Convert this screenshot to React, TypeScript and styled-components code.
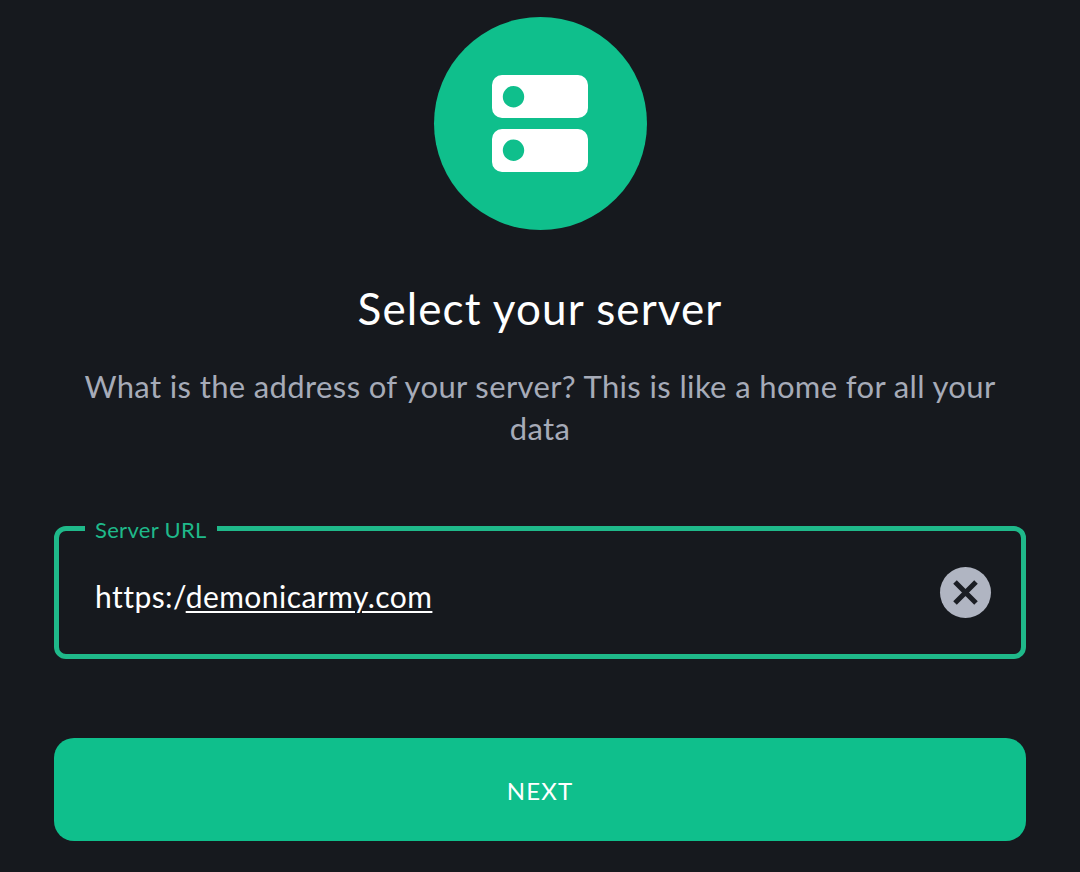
import React from "react";
import styled, { createGlobalStyle } from "styled-components";

const Global = createGlobalStyle`
  html, body { margin: 0; padding: 0; background: #16191e; }
  #root { width: 1080px; height: 872px; overflow: hidden; }
`;

const Page = styled.main`
  width: 1080px;
  height: 872px;
  box-sizing: border-box;
  padding: 17px 54px 0;
  background: #16191e;
  display: flex;
  flex-direction: column;
  align-items: center;
  font-family: Lato, "Liberation Sans", sans-serif;
`;

const Badge = styled.div`
  width: 213px;
  height: 213px;
  border-radius: 50%;
  background: #0fbf8c;
  display: flex;
  align-items: center;
  justify-content: center;
  flex: none;
`;

const Title = styled.h1`
  margin: 52px 0 0;
  font-size: 44px;
  line-height: 52px;
  font-weight: 400;
  letter-spacing: 1.1px;
  color: #ffffff;
  text-align: center;
`;

const Subtitle = styled.p`
  margin: 31px 0 0;
  width: 940px;
  font-size: 31px;
  line-height: 42px;
  font-weight: 400;
  letter-spacing: 0.37px;
  color: #a6abb8;
  text-align: center;
`;

const Field = styled.fieldset`
  margin: 0;
  margin-top: 77px;
  padding: 0;
  width: 100%;
  height: 133px;
  box-sizing: border-box;
  border: 5px solid #1fb98a;
  border-radius: 12px;
`;

const Legend = styled.legend`
  margin-left: 26px;
  padding: 0 10px;
  font-size: 22px;
  line-height: 8px;
  height: 5px;
  font-weight: 400;
  letter-spacing: 0.3px;
  color: #1fb98a;
`;

const FieldRow = styled.div`
  height: 123px;
  box-sizing: border-box;
  padding: 0 30px 0 36px;
  display: flex;
  align-items: center;
  justify-content: space-between;
`;

const Value = styled.div`
  font-size: 30px;
  font-weight: 400;
  letter-spacing: 0.45px;
  color: #ffffff;
  margin-top: 6px;
`;

const Link = styled.span`
  text-decoration: underline;
  text-decoration-thickness: 2px;
  text-underline-offset: 3px;
`;

const Clear = styled.button`
  width: 51px;
  height: 51px;
  padding: 0;
  border: 0;
  border-radius: 50%;
  background: #b0b5c2;
  display: flex;
  align-items: center;
  justify-content: center;
  flex: none;
`;

const NextButton = styled.button`
  margin-top: 79px;
  padding: 2px 0 0;
  width: 100%;
  height: 103px;
  border: 0;
  border-radius: 20px;
  background: #0fbf8c;
  color: #ffffff;
  font-family: inherit;
  font-size: 24px;
  font-weight: 400;
  letter-spacing: 1.2px;
  flex: none;
`;

export default function App() {
  return (
    <Page>
      <Global />
      <Badge>
        <svg width="96" height="97" viewBox="0 0 96 97" aria-hidden="true">
          <path
            fillRule="evenodd"
            fill="#ffffff"
            d="M10 0H86A10 10 0 0 1 96 10V33A10 10 0 0 1 86 43H10A10 10 0 0 1 0 33V10A10 10 0 0 1 10 0ZM21.5 11A10.7 10.7 0 1 0 21.5 32.4A10.7 10.7 0 1 0 21.5 11Z"
          />
          <path
            fillRule="evenodd"
            fill="#ffffff"
            d="M10 54H86A10 10 0 0 1 96 64V87A10 10 0 0 1 86 97H10A10 10 0 0 1 0 87V64A10 10 0 0 1 10 54ZM21.5 64.500A10.700 10.700 0 1 0 21.5 85.900A10.700 10.700 0 1 0 21.5 64.500Z"
          />
        </svg>
      </Badge>
      <Title>Select your server</Title>
      <Subtitle>What is the address of your server? This is like a home for all your data</Subtitle>
      <Field>
        <Legend>Server URL</Legend>
        <FieldRow>
          <Value>
            https:/<Link>demonicarmy.com</Link>
          </Value>
          <Clear aria-label="Clear">
            <svg width="27" height="27" viewBox="0 0 27 27" aria-hidden="true">
              <path d="M3 3L24 24M24 3L3 24" stroke="#1b1e24" strokeWidth="5" fill="none" />
            </svg>
          </Clear>
        </FieldRow>
      </Field>
      <NextButton>NEXT</NextButton>
    </Page>
  );
}
